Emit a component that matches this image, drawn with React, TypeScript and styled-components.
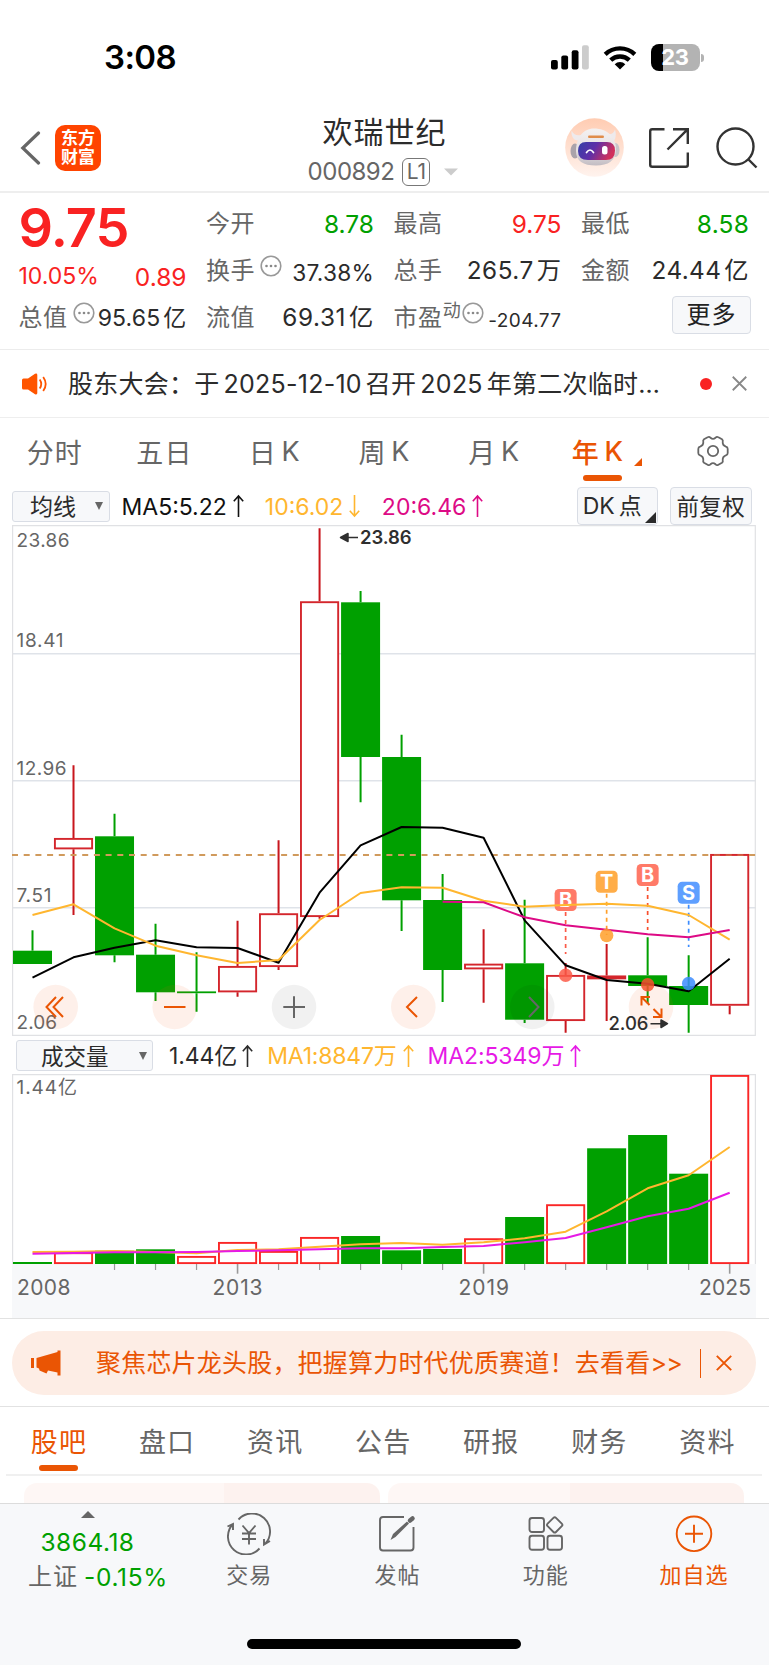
import React from 'react';
import styled, { createGlobalStyle } from 'styled-components';

const GlobalStyle = createGlobalStyle`
  * { box-sizing: border-box; }
  body {
    margin: 0;
    background: #fff;
    color: #2b2b2b;
    font-family: Inter, 'Noto Sans CJK SC', sans-serif;
    font-weight: 400;
  }
  svg { display: block; flex: none; }
`;

const ORANGE = '#ea5504';
const RED = '#f92222';
const GREEN = '#00a000';
const YELLOW = '#ffb62f';
const MAGENTA = '#dd0a85';
const PURPLE = '#e61ae6';

const Page = styled.div`
  width: 769px;
  height: 1665px;
  overflow: hidden;
  display: flex;
  flex-direction: column;
  white-space: nowrap;
`;

const Label = styled.span<{ $size: number; $color?: string; $ls?: number; $weight?: number; $ml?: number; $mt?: number }>`
  font-size: ${(p) => p.$size}px;
  color: ${(p) => p.$color ?? '#2b2b2b'};
  letter-spacing: ${(p) => p.$ls ?? 0}px;
  font-weight: ${(p) => p.$weight ?? 400};
  margin-left: ${(p) => p.$ml ?? 0}px;
  margin-top: ${(p) => p.$mt ?? 0}px;
  line-height: 1.2;
`;

/* ---------- status bar ---------- */

const StatusBar = styled.div`
  height: 115px;
  display: flex;
  align-items: flex-start;
  justify-content: space-between;
  padding: 38px 69.5px 0 104px;
`;

const StatusIcons = styled.div`
  display: flex;
  align-items: center;
  height: 39px;
`;

const Battery = styled.div`
  position: relative;
  width: 49px;
  height: 27px;
  margin-left: 14px;
  border-radius: 8px;
  background: linear-gradient(90deg, #000 0 11.5px, #b3b3b3 11.5px);
  color: #fff;
  font-size: 22px;
  font-weight: 700;
  line-height: 27px;
  text-align: center;
  letter-spacing: -0.2px;
  &::after {
    content: '';
    position: absolute;
    right: -4.5px;
    top: 10px;
    width: 3px;
    height: 8px;
    border-radius: 0 3px 3px 0;
    background: #b3b3b3;
  }
`;

/* ---------- header ---------- */

const Header = styled.header`
  height: 78px;
  border-bottom: 2px solid #eee;
  display: grid;
  grid-template-columns: 260px 1fr 260px;
`;

const HeaderLeft = styled.div`
  display: flex;
  align-items: center;
  padding: 0 0 10px 20px;
`;

const Logo = styled.div`
  width: 46px;
  height: 46px;
  margin-left: 14px;
  border-radius: 10px;
  background: #ff4400;
  color: #fff;
  font-size: 17px;
  font-weight: 700;
  line-height: 19px;
  text-align: center;
  padding-top: 4px;
`;

const HeaderTitle = styled.div`
  display: flex;
  flex-direction: column;
  align-items: center;
`;

const CodeRow = styled.div`
  display: flex;
  align-items: center;
  margin: 7px 3px 0 0;
  height: 30px;
`;

const LevelBox = styled.span`
  width: 28px;
  height: 28px;
  margin: 0 14px 0 8px;
  border: 1.3px solid #777;
  border-radius: 6px;
  color: #666;
  font-size: 21px;
  line-height: 26px;
  text-align: center;
`;

const HeaderRight = styled.div`
  display: flex;
  align-items: center;
  padding: 0 0 11px 55.5px;
`;

/* ---------- quote ---------- */

const Quote = styled.section`
  height: 157px;
  padding: 8px 20px 0 18.5px;
  border-bottom: 1px solid #ececec;
  display: grid;
  grid-template-columns: repeat(4, 168px);
  column-gap: 19.5px;
`;

const QuoteColumn = styled.div`
  display: flex;
  flex-direction: column;
`;

const QuoteRow = styled.div<{ $h?: number; $pt?: number }>`
  height: ${(p) => p.$h ?? 46.7}px;
  padding-top: ${(p) => p.$pt ?? 0}px;
  display: flex;
  align-items: center;
  justify-content: space-between;
`;

const Name = styled.span`
  display: flex;
  align-items: center;
  font-size: 24px;
  line-height: 30px;
  letter-spacing: 0.6px;
  color: #666;
`;

const Sup = styled.span`
  font-size: 18px;
  margin: -13px 0 0 0;
`;

const IconUp = styled.span<{ $ml?: number }>`
  margin: -10px 0 0 ${(p) => p.$ml ?? 5}px;
  display: flex;
`;

const Unit = styled.span`
  margin-left: 3px;
`;

const MoreButton = styled.button`
  width: 79px;
  height: 38px;
  margin: -5px -2px 0 auto;
  padding: 0;
  border: 1px solid #d9dde5;
  border-radius: 4px;
  background: #f7f8fa;
  color: #222;
  font: 24px/36px Inter, 'Noto Sans CJK SC', sans-serif;
  letter-spacing: 1px;
`;

/* ---------- notice ---------- */

const Notice = styled.section`
  height: 68px;
  border-bottom: 1px solid #eee;
  display: flex;
  align-items: center;
  padding: 0 22px 0 21px;
`;

const Num = styled.span`
  margin: 0 4px 0 4px;
`;

const RedDot = styled.span`
  width: 12px;
  height: 12px;
  border-radius: 50%;
  background: ${RED};
  margin: 0 20.5px 0 auto;
`;

/* ---------- tab rows ---------- */

const TabRow = styled.nav<{ $padding: string; $h: number }>`
  height: ${(p) => p.$h}px;
  padding: ${(p) => p.$padding};
  display: grid;
  grid-template-columns: repeat(7, 1fr);
`;

const Tab = styled.div<{ $active?: boolean; $weight?: number }>`
  position: relative;
  display: flex;
  align-items: center;
  justify-content: center;
  font-size: 27px;
  letter-spacing: 1.2px;
  color: ${(p) => (p.$active ? ORANGE : '#666')};
  font-weight: ${(p) => p.$weight ?? 400};
`;

const Period = styled.span`
  margin-left: 4.5px;
  letter-spacing: 0;
`;

const Underline = styled.span<{ $bottom: number }>`
  position: absolute;
  left: 50%;
  bottom: ${(p) => p.$bottom}px;
  width: 39px;
  height: 6px;
  margin-left: -20px;
  border-radius: 3px;
  background: ${ORANGE};
`;

const Corner = styled.span<{ $s: number; $color: string; $margin: string }>`
  width: 0;
  height: 0;
  margin: ${(p) => p.$margin};
  border-left: ${(p) => p.$s}px solid transparent;
  border-bottom: ${(p) => p.$s}px solid ${(p) => p.$color};
`;

/* ---------- indicators ---------- */

const IndicatorBar = styled.div<{ $padding: string }>`
  height: 38px;
  padding: ${(p) => p.$padding};
  display: flex;
  align-items: center;
`;

const Select = styled.div<{ $w: number; $pl: number; $pr: number }>`
  width: ${(p) => p.$w}px;
  height: 31px;
  padding: 0 ${(p) => p.$pr}px 0 ${(p) => p.$pl}px;
  border: 1px solid #d9dde5;
  border-radius: 3px;
  background: #f7f8fa;
  display: flex;
  align-items: center;
  justify-content: space-between;
`;

const Caret = styled.span`
  width: 0;
  height: 0;
  border: 4.5px solid transparent;
  border-top: 8px solid #666;
  border-bottom: 0;
`;

const ChipButton = styled.div<{ $ml: string }>`
  width: 81.5px;
  height: 38px;
  margin-left: ${(p) => p.$ml};
  border: 1px solid #d9dde5;
  border-radius: 4px;
  background: #f7f8fa;
  display: flex;
  align-items: center;
  justify-content: center;
`;

const ChartArea = styled.div`
  margin-left: 12px;
  width: 744px;
`;

/* ---------- banner, tabs, cards ---------- */

const BannerWrap = styled.div`
  height: 89px;
  border-top: 1px solid #e2e2e2;
  border-bottom: 1px solid #e2e2e2;
  padding: 12px 13px 0 12px;
`;

const Banner = styled.div`
  height: 64px;
  border-radius: 32px;
  background: #fdede5;
  display: flex;
  align-items: center;
  padding: 0 24px 0 19px;
`;

const More = styled.span`
  letter-spacing: -0.8px;
`;

const Divider = styled.span`
  width: 1.5px;
  height: 29px;
  background: ${ORANGE};
  margin: 0 15px 0 auto;
`;

const Rule = styled.div`
  height: 2px;
  margin: 0 7px 0 6px;
  background: #f0f0f0;
`;

const Cards = styled.div`
  height: 27px;
  padding: 7px 25px 0 24px;
  display: flex;
  gap: 8px;
  overflow: hidden;
`;

const Card = styled.div<{ $cut: number }>`
  flex: 1;
  height: 60px;
  border-radius: 13px;
  background: linear-gradient(90deg, #fef7f5 0 ${(p) => p.$cut}px, #fdf2ef ${(p) => p.$cut}px);
`;

/* ---------- bottom bar ---------- */

const BottomBar = styled.footer`
  flex: 1;
  background: #f7f8fa;
  border-top: 1px solid #dcdcdc;
  display: flex;
  flex-direction: column;
`;

const BottomItems = styled.div`
  display: grid;
  grid-template-columns: 175px repeat(4, 148.3px);
  height: 135px;
`;

const BottomItem = styled.div`
  display: flex;
  flex-direction: column;
  align-items: center;
  padding-top: 9px;
`;

const IndexItem = styled.div`
  display: flex;
  flex-direction: column;
  align-items: center;
  padding-top: 7px;
`;

const IndexRow = styled.div`
  display: flex;
  align-items: center;
  height: 34px;
  margin: 3px 0 0 21px;
`;

const HomeIndicator = styled.div`
  width: 274px;
  height: 10px;
  margin-left: 247px;
  border-radius: 5px;
  background: #000;
`;

/* ---------- icons ---------- */

const MoreDots = () => (
  <svg width="22" height="22" viewBox="0 0 22 22">
    <circle cx="11" cy="11" r="9.8" fill="none" stroke="#999" strokeWidth="1.6" />
    <circle cx="6.5" cy="11" r="1.3" fill="#888" />
    <circle cx="11" cy="11" r="1.3" fill="#888" />
    <circle cx="15.5" cy="11" r="1.3" fill="#888" />
  </svg>
);

const IconSlot = styled.span<{ $ml: number; $mr: number; $mt?: number }>`
  margin: ${(p) => p.$mt ?? 0}px ${(p) => p.$mr}px 0 ${(p) => p.$ml}px;
`;

const Arrow = ({ color, down, ml = 6, mr = 0 }: { color: string; down?: boolean; ml?: number; mr?: number }) => (
  <IconSlot $ml={ml} $mr={mr}>
    <svg width="11" height="24" viewBox="0 0 11 24" fill="none" stroke={color} strokeWidth="1.6">
      <path d={down ? 'M5.5 1V22M0.8 16.8L5.5 22L10.2 16.8' : 'M5.5 23V2M0.8 7.2L5.5 2L10.2 7.2'} />
    </svg>
  </IconSlot>
);

const Cross = ({ color, size }: { color: string; size: number }) => (
  <svg width={size} height={size} viewBox="0 0 16 16" fill="none" stroke={color} strokeWidth="1.9">
    <path d="M0.8 0.8L15.2 15.2M15.2 0.8L0.8 15.2" />
  </svg>
);

const Robot = () => (
  <svg width="59" height="59" viewBox="0 0 59 59">
    <defs>
      <linearGradient id="halo" x1="0" y1="0" x2="0" y2="1">
        <stop offset="0" stopColor="#ffccb2" />
        <stop offset="1" stopColor="#fff3ee" />
      </linearGradient>
      <linearGradient id="visor" x1="0" y1="0" x2="1" y2="0.3">
        <stop offset="0" stopColor="#3340a8" />
        <stop offset="0.5" stopColor="#5f2fa8" />
        <stop offset="1" stopColor="#d0305c" />
      </linearGradient>
      <linearGradient id="shell" x1="0" y1="0" x2="0" y2="1">
        <stop offset="0" stopColor="#f4f1f1" />
        <stop offset="0.6" stopColor="#e6e1e3" />
        <stop offset="1" stopColor="#c2bcc2" />
      </linearGradient>
    </defs>
    <circle cx="29.5" cy="29.5" r="29.3" fill="url(#halo)" />
    <ellipse cx="10" cy="33" rx="4.5" ry="7.5" fill="#aaa3aa" />
    <ellipse cx="50.5" cy="32" rx="4" ry="7" fill="#c9c4c9" />
    <path d="M6.5 12.5C6 19 9 24 16 22L20 15C15 18 10 19 6.5 12.5ZM50 11.5C52 18 50 24 46 24L42 16C46 17 49 15 50 11.5Z" fill="#eeeaec" />
    <path d="M29 10.500C42 10.500 51 19 51 31C51 43 43 47.500 31 47.500C18 47.500 11 43 11 33C11 20 18 10.500 29 10.500Z" fill="url(#shell)" />
    <path d="M21 24H42Q50 24 50 32.500Q50 42 41 42H23Q13 42 13 33Q13 24 21 24Z" fill="url(#visor)" />
    <rect x="23" y="17.500" width="16" height="2.600" rx="1.300" fill="#e08c4a" />
    <path d="M21.500 34.500Q25 29.500 28.500 34.500" stroke="#fff" strokeWidth="1.700" fill="none" strokeLinecap="round" />
    <rect x="37" y="28" width="5.500" height="8.500" rx="2.500" fill="#fff" />
  </svg>
);

const Gear = () => (
  <svg width="32" height="32" viewBox="0 0 32 32" fill="none" stroke="#666" strokeWidth="1.8" strokeLinejoin="round">
    <path d="M10.600 2.200Q12.300 1.200 13.500 2.800Q16 5 18.500 2.800Q19.700 1.200 21.400 2.200L25 4.200Q26.300 5.200 25.700 7Q25.500 10.400 28.900 11.600Q30.700 12 30.700 14V18Q30.700 20 28.900 20.400Q25.500 21.600 25.700 25Q26.300 26.800 25 27.800L21.400 29.800Q19.700 30.800 18.500 29.200Q16 27 13.500 29.200Q12.300 30.800 10.600 29.800L7 27.800Q5.700 26.800 6.300 25Q6.500 21.600 3.100 20.400Q1.300 20 1.300 18V14Q1.300 12 3.100 11.600Q6.500 10.400 6.300 7Q5.700 5.200 7 4.200Z" />
    <circle cx="16" cy="16" r="5.200" />
  </svg>
);

/* ---------- charts ---------- */

const cx = (i: number) => 32.5 + i * 41.01;

// direction, high, body top, body bottom, low
type Candle = ['g' | 'r', number, number, number, number];
const candles: Candle[] = [
  ['g', 930.3, 950.7, 964, 964],
  ['r', 765.3, 838, 849.3, 915],
  ['g', 813.7, 836.3, 955.3, 962.3],
  ['g', 923.7, 954.7, 992.3, 1001],
  ['g', 952.3, 991.4, 993.2, 1011.7],
  ['r', 920.7, 966, 992.3, 996.7],
  ['r', 840.3, 913.3, 967, 970],
  ['r', 528.3, 601.3, 917, 918.7],
  ['g', 591, 602.3, 757, 802.3],
  ['g', 734.7, 757, 900.3, 931],
  ['g', 874, 900, 970, 1002],
  ['r', 929.3, 963.7, 969.3, 1002.7],
  ['g', 899.7, 963.3, 1019.7, 1023],
  ['r', 963, 975, 1021, 1032.7],
  ['r', 944, 975.5, 979.3, 1021],
  ['g', 937.3, 975.3, 986, 1003.3],
  ['g', 955.3, 986, 1005, 1032.7],
  ['r', 854, 854, 1005.7, 1014.3],
];

const ma5 = [977.7, 957.3, 947.7, 940.3, 947.3, 948, 962.7, 892.7, 845.3, 827, 827.7, 837.7, 920.3, 965.3, 980, 983.7, 991.3, 958.7];
const ma10 = [915, 904.3, 928.3, 945.7, 955.3, 963, 960, 920, 893, 887.2, 887.7, 900.7, 906.7, 905, 903.7, 905.7, 915, 939.7];
const ma20 = [901.7, 902.3, 917.3, 925.3, 929.7, 934.3, 937.3, 930];

const volumes: ['g' | 'r', number][] = [
  ['g', 1262], ['r', 1252.3], ['g', 1250.7], ['g', 1249.3], ['r', 1256], ['r', 1242], ['r', 1251], ['r', 1237], ['g', 1236],
  ['g', 1250.3], ['g', 1249], ['r', 1238.3], ['g', 1217], ['r', 1204.3], ['g', 1148.3], ['g', 1135], ['g', 1173.7], ['r', 1075],
];
const vma1 = [1252, 1251.7, 1251, 1252, 1253.3, 1250, 1249.3, 1246.7, 1244.3, 1243, 1244.7, 1242.3, 1238.3, 1231.7, 1211.3, 1188.3, 1175.3, 1147];
const vma2 = [1253.7, 1253, 1252.3, 1252.3, 1252, 1251, 1250.3, 1249.3, 1248.3, 1248.3, 1247, 1246, 1242.3, 1238, 1227.3, 1216.3, 1208.7, 1192.7];

const line = (ys: number[], start = 0) => ys.map((y, i) => `${cx(i + start)},${y}`).join(' ');

const markers: { i: number; t: string; top: number; dot: number; end: number; c: string; dc: string }[] = [
  { i: 13, t: 'B', top: 889, end: 954, dot: 975.3, c: '#ff7a68', dc: '#fb5a48' },
  { i: 14, t: 'T', top: 870.7, end: 935, dot: 935.5, c: '#ffad48', dc: '#ff9f2a' },
  { i: 15, t: 'B', top: 864, end: 930, dot: 984.7, c: '#ff7a68', dc: '#f8502f' },
  { i: 16, t: 'S', top: 881.7, end: 947, dot: 983.5, c: '#5e9fff', dc: '#3c8cff' },
];

const ChartControl = ({ x, grey, children }: { x: number; grey?: boolean; children: React.ReactNode }) => (
  <g fill="none" stroke={grey ? '#666' : ORANGE} strokeWidth="2">
    <circle cx={x} cy="1007" r="22.3" fill={grey ? 'rgba(0,0,0,0.055)' : 'rgba(245,90,20,0.09)'} stroke="none" />
    {children}
  </g>
);

const PriceChart = () => (
  <svg width="744" height="511" viewBox="12 525 744 511">
    <g stroke="#dfe3e9" strokeWidth="1.6">
      <path d="M12 653.700H756M12 780.700H756M12 907.700H756" />
      <path d="M12.600 525.700H755.300V1035.300H12.600Z" fill="none" stroke="#e0e1e4" strokeWidth="1.200" />
    </g>
    {candles.map(([d, hi, top, bot, lo], i) => {
      const x = cx(i);
      const wick = d === 'g' ? GREEN : '#c8161d';
      return (
        <g key={i}>
          <path d={`M${x} ${hi}V${top}M${x} ${bot}V${lo}`} stroke={wick} strokeWidth="2" />
          {d === 'g' ? (
            <rect x={x - 19.5} y={top} width="39" height={bot - top} fill={GREEN} />
          ) : (
            <rect x={x - 18.6} y={top + 0.9} width="37.2" height={bot - top - 1.8} fill={i === 14 ? '#d0202a' : '#fff'} stroke="#d4262c" strokeWidth="1.9" />
          )}
        </g>
      );
    })}
    <path d="M12 855H756" stroke="#d09a5c" strokeWidth="2" strokeDasharray="6 5.700" />
    <path d="M710.500 854.900H748.500" stroke="#d4262c" strokeWidth="1.900" opacity="0.6" />
    <g fontFamily="Inter" fontSize="19" fill="#666">
      <text x="16.500" y="546.700" textLength="53">23.86</text>
      <text x="16.500" y="647" textLength="47">18.41</text>
      <text x="16.500" y="774.700" textLength="50">12.96</text>
      <text x="16.500" y="901.700" textLength="35">7.51</text>
      <text x="16.500" y="1029" textLength="40.500">2.06</text>
    </g>
    {markers.map((m) => (
      <g key={m.i}>
        <path d={`M${cx(m.i)} ${m.top + 23}V${m.end}`} stroke={m.dc} strokeWidth="1.7" strokeDasharray="4 4" />
        <rect x={cx(m.i) - 11} y={m.top} width="22" height="22" rx="4.5" fill={m.c} />
        <text x={cx(m.i)} y={m.top + 18.2} textAnchor="middle" fontFamily="Inter" fontSize="20" fontWeight="700" fill="#fff">{m.t}</text>
      </g>
    ))}
    <g fill="none" strokeWidth="2" strokeLinejoin="round">
      <polyline points={line(ma5)} stroke="#000" />
      <polyline points={line(ma10)} stroke={YELLOW} />
      <polyline points={line(ma20, 10)} stroke={MAGENTA} />
    </g>
    {markers.map((m) => (
      <circle key={m.i} cx={cx(m.i)} cy={m.dot} r="6.7" fill={m.dc} opacity="0.85" />
    ))}
    <ChartControl x={55.7}>
      <path d="M56 997L46.500 1007L56 1017M63 997L53.500 1007L63 1017" />
    </ChartControl>
    <ChartControl x={174.7}>
      <path d="M164 1007H185.500" />
    </ChartControl>
    <ChartControl x={294} grey>
      <path d="M283.300 1007H305M294 996.300V1018" />
    </ChartControl>
    <ChartControl x={413.3}>
      <path d="M417 997L407 1007L417 1017" />
    </ChartControl>
    <ChartControl x={532.3} grey>
      <path d="M529 997L538.500 1007L529 1017" />
    </ChartControl>
    <ChartControl x={651}>
      <path d="M650 997H641.500V1005.500M641.500 997L649.500 1005M653 1017H661.500V1008.500M661.500 1017L653.500 1009" />
    </ChartControl>
    <g fontFamily="Inter" fontSize="18.500" fontWeight="600" fill="#2f2f2f">
      <text x="360" y="544.300" textLength="51.500">23.86</text>
      <text x="608.500" y="1030.300" textLength="40" fontWeight="500">2.06</text>
      <path d="M347 537.500H358M340.500 537.500L348 533.500V541.500Z" stroke="#2f2f2f" strokeWidth="1.500" strokeLinejoin="round" />
      <path d="M650.500 1023.700H662M667.500 1023.700L661 1020V1027.500Z" stroke="#2f2f2f" strokeWidth="1.500" strokeLinejoin="round" />
    </g>
  </svg>
);

const VolumeChart = () => (
  <svg width="744" height="244" viewBox="12 1074 744 244">
    <rect x="12" y="1264" width="744" height="54" fill="#f7f8fa" />
    <path d="M12.600 1264V1074.600H755.400V1264" fill="none" stroke="#e0e1e4" strokeWidth="1.200" />
    <text x="16.500" y="1094" fontFamily="Inter, 'Noto Sans CJK SC'" fontSize="19" fill="#666" textLength="60.500">1.44亿</text>
    {volumes.map(([d, top], i) =>
      d === 'g' ? (
        <rect key={i} x={cx(i) - 19.5} y={top} width="39" height={1264 - top} fill={GREEN} />
      ) : (
        <rect key={i} x={cx(i) - 18.6} y={top + 0.9} width="37.2" height={1264 - top - 1.8} fill="#fff" stroke="#fa2626" strokeWidth="1.9" />
      ),
    )}
    {volumes.map((_, i) =>
      i < 2 ? null : (
        <path key={i} d={`M${cx(i)} 1264V${i % 6 === 5 ? 1273.7 : 1270}`} stroke="#999" strokeWidth={i % 6 === 5 ? 1.6 : 1.2} />
      ),
    )}
    <g fill="none" strokeWidth="2" strokeLinejoin="round">
      <polyline points={line(vma1)} stroke={YELLOW} />
      <polyline points={line(vma2)} stroke={PURPLE} />
    </g>
    <g fontFamily="Inter" fontSize="21" fill="#666">
      <text x="17" y="1295" textLength="53.500">2008</text>
      <text x="212.500" y="1295" textLength="50">2013</text>
      <text x="458.500" y="1295" textLength="50.500">2019</text>
      <text x="699" y="1295" textLength="52">2025</text>
    </g>
  </svg>
);

export default function App() {
  return (
    <Page>
      <GlobalStyle />
      <StatusBar>
        <Label $size={33} $weight={600} $color="#000" $ls={-0.6}>3:08</Label>
        <StatusIcons>
          <svg width="38" height="25" viewBox="0 0 38 25">
            <rect x="0" y="15" width="6.800" height="9.500" rx="2" />
            <rect x="10.300" y="10.500" width="6.800" height="14" rx="2" />
            <rect x="20.700" y="5.300" width="6.800" height="19.200" rx="2" />
            <rect x="31" y="0.300" width="6.800" height="24.200" rx="2" fill="#ccc" />
          </svg>
          <IconSlot $ml={14} $mr={0}>
            <svg width="34" height="25" viewBox="0 0 34 25" fill="none" stroke="#000" strokeWidth="4.400">
              <path d="M2.200 9.300A21.500 21.500 0 0 1 31.800 9.300" />
              <path d="M7.700 15.200A13.500 13.500 0 0 1 26.300 15.200" />
              <path d="M17 24.500L11.700 19.200A7.700 7.700 0 0 1 22.300 19.200Z" fill="#000" stroke="none" />
            </svg>
          </IconSlot>
          <Battery>23</Battery>
        </StatusIcons>
      </StatusBar>

      <Header>
        <HeaderLeft>
          <svg width="21" height="34" viewBox="0 0 21 34" fill="none" stroke="#666" strokeWidth="3.200" strokeLinecap="round">
            <path d="M18.500 2L2.800 17L18.500 32" />
          </svg>
          <Logo>东方<br />财富</Logo>
        </HeaderLeft>
        <HeaderTitle>
          <Label $size={30} $ls={1} $mt={-1}>欢瑞世纪</Label>
          <CodeRow>
            <Label $size={24} $color="#666" $ls={-0.5}>000892</Label>
            <LevelBox>L1</LevelBox>
            <svg width="14" height="8" viewBox="0 0 14 8"><path d="M0 0.500H14L7 7.500Z" fill="#ccc" /></svg>
          </CodeRow>
        </HeaderTitle>
        <HeaderRight>
          <Robot />
          <IconSlot $ml={25} $mr={27}>
            <svg width="40" height="40" viewBox="0 0 40 40" fill="none" stroke="#333" strokeWidth="2.400">
              <path d="M15.500 1.200H3.200Q1.200 1.200 1.200 3.200V36.800Q1.200 38.800 3.200 38.800H36.800Q38.800 38.800 38.800 36.800V24.500M24 1.200H38.800V16M38.800 1.200L18.500 21.500" />
            </svg>
          </IconSlot>
          <svg width="42" height="42" viewBox="0 0 42 42" fill="none" stroke="#333" strokeWidth="2.400">
            <circle cx="19.500" cy="19.500" r="18" />
            <path d="M32 32L40.500 40.500" />
          </svg>
        </HeaderRight>
      </Header>

      <Quote>
        <QuoteColumn>
          <QuoteRow $h={53} $pt={1}><Label $size={54} $weight={600} $color={RED} $ls={-0.9}>9.75</Label></QuoteRow>
          <QuoteRow $h={40.4} $pt={5}>
            <Label $size={23} $color={RED}>10.05%</Label>
            <Label $size={24.5} $color={RED} $mt={2}>0.89</Label>
          </QuoteRow>
          <QuoteRow>
            <Name>总值<IconUp><MoreDots /></IconUp></Name>
            <Label $size={23} $ls={0.15} $mt={2}>95.65<Unit>亿</Unit></Label>
          </QuoteRow>
        </QuoteColumn>
        <QuoteColumn>
          <QuoteRow><Name>今开</Name><Label $size={24.5} $color={GREEN}>8.78</Label></QuoteRow>
          <QuoteRow>
            <Name>换手<IconUp><MoreDots /></IconUp></Name>
            <Label $size={22.7} $ls={0.25} $mt={3}>37.38%</Label>
          </QuoteRow>
          <QuoteRow><Name>流值</Name><Label $size={24.3} $ls={0.6}>69.31<Unit>亿</Unit></Label></QuoteRow>
        </QuoteColumn>
        <QuoteColumn>
          <QuoteRow><Name>最高</Name><Label $size={24.5} $color={RED}>9.75</Label></QuoteRow>
          <QuoteRow><Name>总手</Name><Label $size={24.3} $ls={0.5}>265.7<Unit>万</Unit></Label></QuoteRow>
          <QuoteRow>
            <Name>市盈<Sup>动</Sup><IconUp $ml={1}><MoreDots /></IconUp></Name>
            <Label $size={19} $ls={0.4} $mt={7}>-204.77</Label>
          </QuoteRow>
        </QuoteColumn>
        <QuoteColumn>
          <QuoteRow><Name>最低</Name><Label $size={24.5} $ls={0.2} $color={GREEN}>8.58</Label></QuoteRow>
          <QuoteRow><Name>金额</Name><Label $size={24.3} $ls={0.4}>24.44<Unit>亿</Unit></Label></QuoteRow>
          <QuoteRow><MoreButton>更多</MoreButton></QuoteRow>
        </QuoteColumn>
      </Quote>

      <Notice>
        <svg width="27" height="22" viewBox="0 0 27 22">
          <path d="M2.500 5.500H7L14 0.800Q16.300 0 16.300 2V20Q16.300 22 14 21.200L7 16.500H2.500Q1 16.500 1 15V7Q1 5.500 2.500 5.500Z" fill="#ff5500" />
          <path d="M18.700 6.500Q21.800 11 18.700 15.500M22.200 4Q27.200 11 22.200 18" fill="none" stroke="#ff5500" strokeWidth="1.800" />
        </svg>
        <Label $size={25} $ml={20} $ls={0.25}>股东大会：于<Num>2025-12-10</Num>召开<Num>2025</Num>年第二次临时…</Label>
        <RedDot />
        <Cross color="#888" size={15} />
      </Notice>

      <TabRow $padding="0 1px 3px 0" $h={69}>
        <Tab>分时</Tab>
        <Tab>五日</Tab>
        <Tab>日<Period>K</Period></Tab>
        <Tab>周<Period>K</Period></Tab>
        <Tab>月<Period>K</Period></Tab>
        <Tab $active $weight={500}>
          年<Period>K</Period>
          <Corner $s={8} $color={ORANGE} $margin="21px -7px 0 11px" />
          <Underline $bottom={3} />
        </Tab>
        <Tab><Gear /></Tab>
      </TabRow>

      <IndicatorBar $padding="0 17.5px 0 12px">
        <Select $w={97.5} $pl={17} $pr={6}><Label $size={23} $mt={3}>均线</Label><Caret /></Select>
        <Label $size={23} $ml={12} $mt={3} $color="#111">MA5:5.22</Label>
        <Arrow color="#111" mr={21} />
        <Label $size={23} $mt={3} $color={YELLOW}>10:6.02</Label>
        <Arrow color={YELLOW} down mr={21.5} />
        <Label $size={23} $mt={3} $color={MAGENTA}>20:6.46</Label>
        <Arrow color={MAGENTA} />
        <ChipButton $ml="auto">
          <Label $size={23} $mt={1}>DK<Num>点</Num></Label>
          <Corner $s={11.5} $color="#2b2b2b" $margin="22px -4px 0 -1px" />
        </ChipButton>
        <ChipButton $ml="12px"><Label $size={22.5} $ls={0.3}>前复权</Label></ChipButton>
      </IndicatorBar>

      <ChartArea><PriceChart /></ChartArea>

      <IndicatorBar $padding="1px 17.5px 0 16px">
        <Select $w={137} $pl={24} $pr={5}><Label $size={22.5} $mt={2}>成交量</Label><Caret /></Select>
        <Label $size={23} $ml={16} $mt={2} $ls={-0.1}>1.44亿</Label>
        <Arrow color="#2b2b2b" mr={14} ml={5} />
        <Label $size={23} $mt={2} $ls={-0.2} $color={YELLOW}>MA1:8847万</Label>
        <Arrow color={YELLOW} mr={14} />
        <Label $size={23} $mt={2} $ls={-0.1} $color={PURPLE}>MA2:5349万</Label>
        <Arrow color={PURPLE} />
      </IndicatorBar>

      <ChartArea><VolumeChart /></ChartArea>

      <BannerWrap>
        <Banner>
          <svg width="30" height="26" viewBox="0 0 30 26" fill={ORANGE}>
            <path d="M0 8H3V18H0ZM5.500 8L26.500 2V0.500H29.500V25.500H26.500V22.500L17 20.500L15.500 23.500L8.500 20.500L8 18.500L5.500 17.500Z" />
          </svg>
          <Label $size={25} $ml={35} $ls={0.2} $color={ORANGE}>聚焦芯片龙头股，把握算力时代优质赛道！去看看<More>&gt;&gt;</More></Label>
          <Divider />
          <Cross color={ORANGE} size={16} />
        </Banner>
      </BannerWrap>

      <TabRow $padding="0 7.5px 0 5px" $h={67}>
        <Tab $active>股吧<Underline $bottom={3} /></Tab>
        <Tab>盘口</Tab>
        <Tab>资讯</Tab>
        <Tab>公告</Tab>
        <Tab>研报</Tab>
        <Tab>财务</Tab>
        <Tab>资料</Tab>
      </TabRow>
      <Rule />
      <Cards>
        <Card $cut={200} />
        <Card $cut={182} />
      </Cards>

      <BottomBar>
        <BottomItems>
          <IndexItem>
            <svg width="14" height="7" viewBox="0 0 14 7"><path d="M0 7L7 0L14 7Z" fill="#666" /></svg>
            <Label $size={24.5} $color={GREEN} $ls={0.5} $mt={10}>3864.18</Label>
            <IndexRow>
              <Label $size={24} $color="#666" $ls={1}>上证</Label>
              <Label $size={24.5} $color={GREEN} $ls={0.7} $ml={6}>-0.15%</Label>
            </IndexRow>
          </IndexItem>
          <BottomItem>
            <svg width="44" height="42" viewBox="0 0 44 42" fill="none" stroke="#666" strokeWidth="1.900">
              <path d="M11.500 6.500A18 18 0 0 1 38.500 30.500M32.500 35.500A18 18 0 0 1 5.500 11.500M0.500 13.500L6 11V17M37 26V31.500L43 28M15.500 12.500L22 20L28.500 12.500M22 20V31.500M15 20.500H29M15 26H29" />
            </svg>
            <Label $size={22} $color="#666" $ls={1} $mt={7}>交易</Label>
          </BottomItem>
          <BottomItem>
            <svg width="38" height="42" viewBox="0 0 38 42" fill="none" stroke="#666" strokeWidth="1.900">
              <path d="M26 4H5Q2 4 2 7V34.500Q2 37.500 5 37.500H32.500Q35.500 37.500 35.500 34.500V14" />
              <path d="M12.500 27L15 21L29 8.500L31 10.500L17.500 24Z" fill="#666" stroke="none" />
              <path d="M32 7.500L34.500 5.500" strokeWidth="4.500" strokeLinecap="round" />
            </svg>
            <Label $size={22} $color="#666" $ls={1} $mt={7}>发帖</Label>
          </BottomItem>
          <BottomItem>
            <svg width="36" height="42" viewBox="0 0 36 42" fill="none" stroke="#666" strokeWidth="1.900">
              <rect x="1.500" y="5" width="14.500" height="14" rx="2.500" />
              <rect x="1.500" y="22.800" width="14.500" height="14" rx="2.500" />
              <rect x="19.500" y="22.800" width="14.500" height="14" rx="2.500" />
              <rect x="20.800" y="6" width="11.800" height="11.800" rx="1.800" transform="rotate(45 26.700 11.900)" />
            </svg>
            <Label $size={22} $color="#666" $ls={1} $mt={7}>功能</Label>
          </BottomItem>
          <BottomItem>
            <svg width="38" height="42" viewBox="0 0 38 42" fill="none" stroke={ORANGE} strokeWidth="1.900">
              <circle cx="19" cy="20.800" r="17.300" />
              <path d="M10 20.800H28M19 11.800V29.800" />
            </svg>
            <Label $size={22} $color={ORANGE} $ls={1} $mt={7}>加自选</Label>
          </BottomItem>
        </BottomItems>
        <HomeIndicator />
      </BottomBar>
    </Page>
  );
}
